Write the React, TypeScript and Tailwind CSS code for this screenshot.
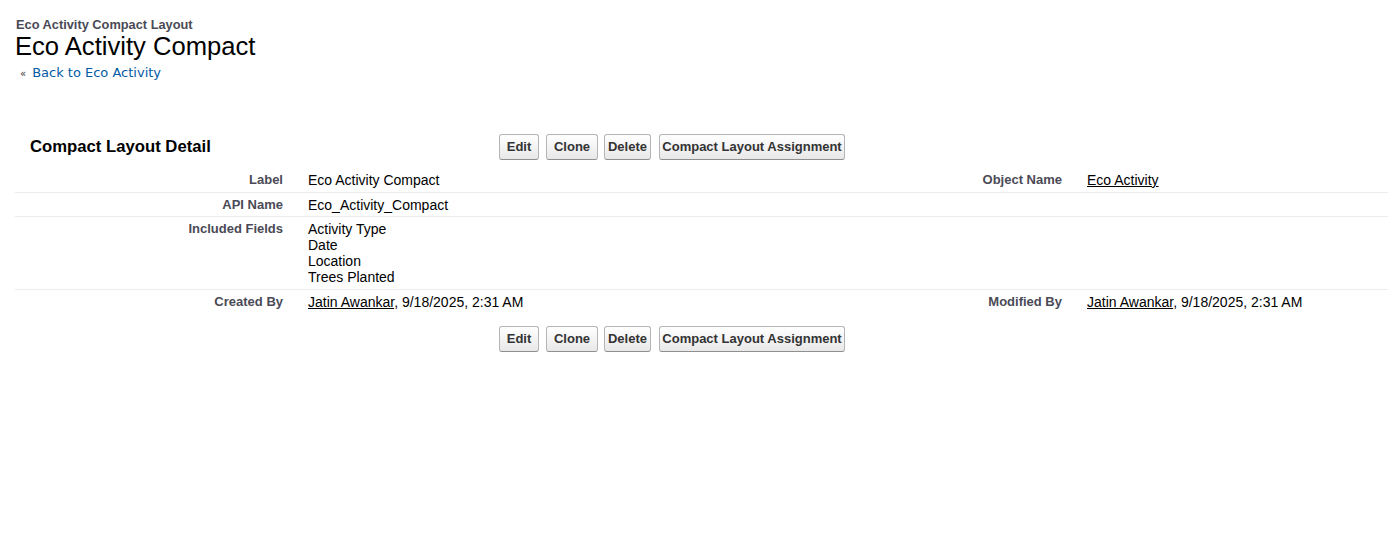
// Compact layout detail page (classic setup style)

const buttons = [
  { label: 'Edit', w: 'w-[40px]', ml: '' },
  { label: 'Clone', w: 'w-[52px]', ml: 'ml-[7px]' },
  { label: 'Delete', w: 'w-[47px]', ml: 'ml-[6px]' },
  { label: 'Compact Layout Assignment', w: 'w-[186px]', ml: 'ml-[8px]' },
];

function ButtonBar() {
  return (
    <div className="flex">
      {buttons.map((b) => (
        <button
          key={b.label}
          className={`${b.w} ${b.ml} h-[26px] rounded-[3px] border border-[#b5b5b5] border-b-[#8f8f8f] bg-gradient-to-b from-white to-[#e8e8e9] text-center text-[13px] font-bold text-[#333]`}
        >
          {b.label}
        </button>
      ))}
    </div>
  );
}

function Label({ children, pad }: { children?: React.ReactNode; pad: string }) {
  return (
    <div className={`pr-3 ${pad} text-right text-[13px] font-bold leading-[16px] text-[#4a4a56]`}>{children}</div>
  );
}

function Value({ children, pad }: { children?: React.ReactNode; pad: string }) {
  return <div className={`pl-[13px] ${pad} text-[14px] leading-[16px] text-black`}>{children}</div>;
}

function Row({ children, border = true }: { children: React.ReactNode; border?: boolean }) {
  return (
    <div className={`grid grid-cols-[280px_1fr_280px_314px] ${border ? 'border-b border-[#ececec]' : ''}`}>
      {children}
    </div>
  );
}

export default function App() {
  return (
    <div className="min-h-[535px] bg-white font-['Liberation_Sans',Arial,sans-serif] text-black">
      {/* page header */}
      <div className="pl-[16px] pt-[17px]">
        <div className="text-[12.8px] font-bold leading-[16px] text-[#4a4a56]">Eco Activity Compact Layout</div>
        <h1 className="-ml-px -mt-px text-[25.6px] leading-[28px] text-black">Eco Activity Compact</h1>
        <div className="mt-[5px] pl-[4px] font-['DejaVu_Sans',Verdana,sans-serif] text-[13px] leading-[16px]">
          <span className="text-[10px] text-[#333]">«</span>
          <a href="#" className="ml-[6px] text-[#015ba7]">Back to Eco Activity</a>
        </div>
      </div>

      {/* detail block */}
      <div className="ml-[15px] mt-[52px]">
        <div className="flex h-[26px] items-center">
          <h2 className="w-[484px] pl-[15px] text-[16.7px] font-bold text-black">Compact Layout Detail</h2>
          <ButtonBar />
        </div>

        <div className="mt-[8px]">
          <Row>
            <Label pad="pt-[4px] pb-[4px]">Label</Label>
            <Value pad="pt-[4px] pb-[4px]">Eco Activity Compact</Value>
            <Label pad="pt-[4px] pb-[4px]">Object Name</Label>
            <Value pad="pt-[4px] pb-[4px]">
              <a href="#" className="underline">Eco Activity</a>
            </Value>
          </Row>
          <Row>
            <Label pad="pt-[4px] pb-[3px]">API Name</Label>
            <Value pad="pt-[4px] pb-[3px]">Eco_Activity_Compact</Value>
            <Label pad="pt-[4px] pb-[3px]" />
            <Value pad="pt-[4px] pb-[3px]" />
          </Row>
          <Row>
            <Label pad="pt-[4px] pb-[4px]">Included Fields</Label>
            <Value pad="pt-[4px] pb-[4px]">
              <div>Activity Type</div>
              <div>Date</div>
              <div>Location</div>
              <div>Trees Planted</div>
            </Value>
            <Label pad="pt-[4px] pb-[4px]" />
            <Value pad="pt-[4px] pb-[4px]" />
          </Row>
          <Row border={false}>
            <Label pad="pt-[4px] pb-[3px]">Created By</Label>
            <Value pad="pt-[4px] pb-[3px]">
              <a href="#" className="underline">Jatin Awankar</a>, 9/18/2025, 2:31 AM
            </Value>
            <Label pad="pt-[4px] pb-[3px]">Modified By</Label>
            <Value pad="pt-[4px] pb-[3px]">
              <a href="#" className="underline">Jatin Awankar</a>, 9/18/2025, 2:31 AM
            </Value>
          </Row>
        </div>

        <div className="ml-[484px] mt-[13px]">
          <ButtonBar />
        </div>
      </div>
    </div>
  );
}
